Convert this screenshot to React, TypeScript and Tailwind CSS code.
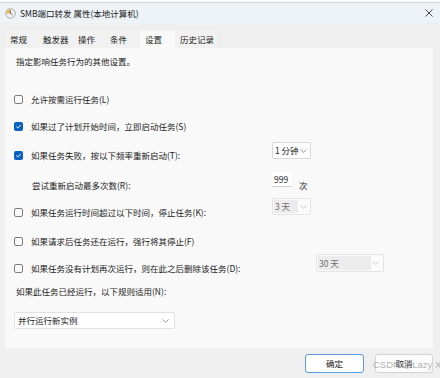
import React from "react";

const font = { fontFamily: '"Noto Sans CJK SC", "Noto Sans", sans-serif' };

function Chevron({ color = "#8a8a8a" }: { color?: string }) {
  return (
    <svg width="7" height="4" viewBox="0 0 7 4" className="shrink-0">
      <path d="M0.5 0.5 L3.5 3.3 L6.5 0.5" fill="none" stroke={color} strokeWidth="0.9" />
    </svg>
  );
}

function Check({ checked }: { checked?: boolean }) {
  if (checked)
    return (
      <div className="w-[9px] h-[9px] rounded-[2px] bg-[#0a5fc2] flex items-center justify-center shrink-0">
        <svg width="7" height="7" viewBox="0 0 7 7">
          <path d="M1.3 3.6 L2.8 5 L5.8 1.9" fill="none" stroke="#fff" strokeWidth="1" />
        </svg>
      </div>
    );
  return <div className="w-[9px] h-[9px] rounded-[2px] border border-[#7d7d7d] bg-[#fbfbfb] shrink-0" />;
}

function CheckRow({
  checked,
  label,
  labelWidth = 258,
  mt,
  children,
}: {
  checked?: boolean;
  label: string;
  labelWidth?: number;
  mt: string;
  children?: React.ReactNode;
}) {
  return (
    <div className={`flex items-center h-[18px] pl-[9px] ${mt}`}>
      <div className="flex items-center gap-[8px] shrink-0" style={{ width: labelWidth }}>
        <Check checked={checked} />
        <span className="whitespace-nowrap">{label}</span>
      </div>
      {children}
    </div>
  );
}

export default function App() {
  return (
    <div
      className="w-[440px] h-[378px] bg-[#efefef] text-[8.5px] text-[#1b1b1b] overflow-hidden relative leading-none"
      style={font}
    >
      {/* top strip */}
      <div className="h-[3px] bg-[#fafafa] border-b border-[#d4d4d4]" />
      {/* title bar */}
      <div className="h-[20px] bg-[#eef3f8] flex items-center pl-[5px] pr-[7px]">
        <svg width="11" height="11" viewBox="0 0 11 11" className="shrink-0">
          <circle cx="5.5" cy="5.5" r="4.8" fill="#f1f1f1" stroke="#9a9a9a" strokeWidth="0.8" />
          <path d="M5.5 5.5 L5.5 1.2 A4.3 4.3 0 0 0 1.2 5.5 Z" fill="#e6b44c" />
          <path d="M5.5 2.5 L5.5 5.5 L7.6 6.8" fill="none" stroke="#555" strokeWidth="0.8" />
        </svg>
        <span className="ml-[4px] whitespace-nowrap text-[#222]">SMB端口转发 属性(本地计算机)</span>
        <div className="ml-auto">
          <svg width="8" height="8" viewBox="0 0 8 8">
            <path d="M0.5 0.5 L7.5 7.5 M7.5 0.5 L0.5 7.5" stroke="#333" strokeWidth="0.9" />
          </svg>
        </div>
      </div>
      {/* tabs */}
      <div className="h-[25px] flex items-end pl-[5px]">
        {[
          ["常规", 33],
          ["触发器", 35],
          ["操作", 32],
          ["条件", 35],
          ["设置", 35],
          ["历史记录", 42],
        ].map(([t, w]) => {
          const sel = t === "设置";
          return (
            <div
              key={t as string}
              className={`h-[17px] flex items-center pl-[5px] whitespace-nowrap ${sel ? "bg-[#f9f9f9]" : "bg-[#f1f1f1]"}`}
              style={{ width: w as number }}
            >
              {t}
            </div>
          );
        })}
      </div>
      {/* panel */}
      <div className="mx-[5px] mr-[7px] h-[300px] bg-[#f9f9f9] flex flex-col">
        <div className="h-[26px] flex items-center pl-[11px]">指定影响任务行为的其他设置。</div>

        <CheckRow label="允许按需运行任务(L)" mt="mt-[16px]" />
        <CheckRow checked label="如果过了计划开始时间，立即启动任务(S)" mt="mt-[9px]" />
        <CheckRow checked label="如果任务失败，按以下频率重新启动(T):" mt="mt-[11px]">
          <div className="mb-[9px] w-[39px] h-[17px] bg-white border border-[#d9d9d9] rounded-[2px] flex items-center pl-[2px] pr-[3px]">
            <span className="whitespace-nowrap">1 分钟</span>
            <div className="ml-auto">
              <Chevron />
            </div>
          </div>
        </CheckRow>

        <div className="flex items-center h-[18px] pl-[27px] mt-[12px]">
          <div className="w-[240px] shrink-0 whitespace-nowrap">尝试重新启动最多次数(R):</div>
          <div className="mb-[11px] w-[20px] h-[15px] bg-white border-b border-[#cfcfcf] flex items-center pl-[2px]">
            999
          </div>
          <span className="ml-[7px]">次</span>
        </div>

        <CheckRow label="如果任务运行时间超过以下时间，停止任务(K):" mt="mt-[9px]">
          <div className="mb-[11px] w-[39px] h-[17px] bg-[#fbfbfb] border border-[#e4e4e4] rounded-[2px] flex items-center p-[1px] pr-[3px]">
            <div className="w-[24px] h-full bg-[#ececec] flex items-center pl-[1px] text-[#6e6e6e] whitespace-nowrap">
              3 天
            </div>
            <div className="ml-auto">
              <Chevron color="#c4c4c4" />
            </div>
          </div>
        </CheckRow>

        <CheckRow label="如果请求后任务还在运行，强行将其停止(F)" mt="mt-[11px]" />

        <CheckRow label="如果任务没有计划再次运行，则在此之后删除该任务(D):" labelWidth={302} mt="mt-[9px]">
          <div className="mb-[10px] w-[68px] h-[18px] bg-[#fbfbfb] border border-[#e4e4e4] rounded-[2px] flex items-center p-[1px] pr-[4px]">
            <div className="w-[53px] h-full bg-[#ececec] flex items-center pl-[1px] text-[#6e6e6e] whitespace-nowrap">
              30 天
            </div>
            <div className="ml-auto">
              <Chevron color="#c4c4c4" />
            </div>
          </div>
        </CheckRow>

        <div className="h-[18px] mt-[5px] flex items-center pl-[11px] whitespace-nowrap">
          如果此任务已经运行，以下规则适用(N):
        </div>
        <div className="mt-[12px] ml-[9px] w-[161px] h-[17px] bg-white border border-[#e2e2e2] rounded-[2px] flex items-center pl-[3px] pr-[5px]">
          <span className="whitespace-nowrap">并行运行新实例</span>
          <div className="ml-auto">
            <Chevron />
          </div>
        </div>
      </div>
      {/* buttons */}
      <div className="flex justify-end gap-[11px] pr-[7px] mt-[6px]">
        <div className="w-[59px] h-[19px] bg-white border border-[#5b9bdf] rounded-[3px] flex items-center justify-center">
          确定
        </div>
        <div className="w-[58px] h-[19px] bg-[#fcfcfc] border border-[#d4d4d4] rounded-[3px] flex items-center justify-center">
          取消
        </div>
      </div>
      {/* watermark */}
      <div
        className="absolute left-[373px] top-[360px] text-[9.5px] text-[#a0a0a0]/80 whitespace-nowrap"
        style={{ fontFamily: '"Liberation Sans", Arial, sans-serif' }}
      >
        CSDN @Lazy X
      </div>
    </div>
  );
}
